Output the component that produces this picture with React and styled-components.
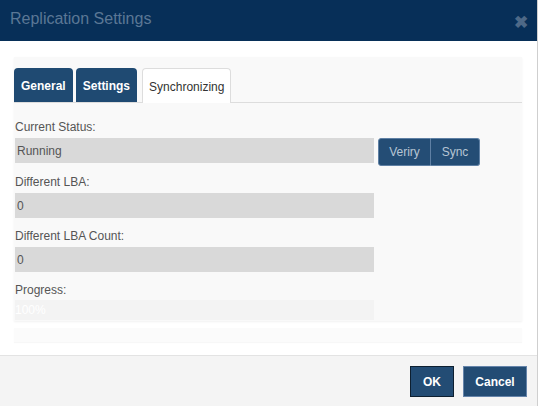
import React, { useState } from "react";
import styled, { createGlobalStyle } from "styled-components";

const Global = createGlobalStyle`
  html, body {
    margin: 0;
    padding: 0;
    background: #ffffff;
  }
  body {
    font-family: "Liberation Sans", Arial, sans-serif;
  }
`;

const Dialog = styled.div`
  width: 537px;
  height: 406px;
  border-right: 1px solid #cfcfcf;
  display: flex;
  flex-direction: column;
  background: #ffffff;
`;

const Header = styled.div`
  height: 41px;
  background: #072f58;
  display: flex;
  align-items: center;
  justify-content: space-between;
  padding: 0 10px 0 10px;
  box-sizing: border-box;
`;

const Title = styled.h3`
  margin: 0;
  margin-top: -4px;
  font-size: 16px;
  font-weight: normal;
  color: #5b7795;
`;

const Close = styled.span`
  color: #4e6987;
  font-size: 17px;
  font-weight: bold;
  margin-top: 4px;
  margin-right: -1px;
`;

const Body = styled.div`
  flex: 1;
  padding: 16px 15px 0 14px;
  display: flex;
  flex-direction: column;
`;

const Panel = styled.div`
  background: #f9f9f9;
  padding-top: 11px;
  padding-bottom: 1px;
  box-shadow: 0 1px 2px rgba(0, 0, 0, 0.06);
`;

const TabBar = styled.div`
  display: flex;
  gap: 3px;
  border-bottom: 1px solid #dddddd;
  height: 34px;
`;

const Tab = styled.button`
  font-family: inherit;
  font-size: 12px;
  height: ${(p) => (p.active ? "35px" : "34px")};
  padding: 2px ${(p) => (p.active ? "6px" : "7px")} 0;
  margin-left: ${(p) => (p.active ? "2px" : "0")};
  border-radius: 4px 4px 0 0;
  cursor: pointer;
  background: ${(p) => (p.active ? "#ffffff" : "#1f4a72")};
  color: ${(p) => (p.active ? "#333333" : "#ffffff")};
  font-weight: ${(p) => (p.active ? "normal" : "bold")};
  border: ${(p) => (p.active ? "1px solid #dddddd" : "none")};
  border-bottom: none;
`;

const Content = styled.div`
  padding: 17px 0 0 1px;
  display: flex;
  flex-direction: column;
`;

const Label = styled.div`
  font-size: 12px;
  color: #555555;
  height: 14px;
  margin-bottom: ${(p) => (p.tight ? "3px" : "4px")};
  margin-top: ${(p) => p.top || "0"}px;
`;

const Row = styled.div`
  display: flex;
  align-items: flex-start;
  gap: 4px;
`;

const Field = styled.div`
  width: 359px;
  height: 25px;
  background: #d9d9d9;
  font-size: 12px;
  color: #555555;
  display: flex;
  align-items: center;
  padding-left: 2px;
  box-sizing: border-box;
`;

const Group = styled.div`
  display: flex;
  height: 28px;
`;

const GroupButton = styled.button`
  font-family: inherit;
  font-size: 12px;
  color: #b7c5d4;
  background: #244d75;
  border: 1px solid #5f80a4;
  border-radius: ${(p) => (p.first ? "3px 0 0 3px" : "0 3px 3px 0")};
  border-left-width: ${(p) => (p.first ? "1px" : "0")};
  width: ${(p) => p.w}px;
  padding: 0;
  cursor: pointer;
`;

const Progress = styled.div`
  width: 359px;
  height: 20px;
  background: #f0f0f0;
  display: flex;
  align-items: center;
`;

const Bar = styled.div`
  height: 100%;
  background: #f3f3f3;
  color: #ffffff;
  font-size: 12px;
  display: flex;
  align-items: center;
`;

const Strip = styled.div`
  margin-top: 7px;
  height: 14px;
  background: #fbfbfb;
  box-shadow: 0 1px 1px rgba(0, 0, 0, 0.03);
`;

const Footer = styled.div`
  height: 51px;
  background: #f4f4f4;
  border-top: 1px solid #e3e3e3;
  display: flex;
  justify-content: flex-end;
  align-items: flex-start;
  gap: 9px;
  padding: 10px 10px 0 0;
  box-sizing: border-box;
`;

const FooterButton = styled.button`
  font-family: inherit;
  font-size: 12px;
  font-weight: bold;
  color: #ffffff;
  background: #234c74;
  border: 1px solid ${(p) => (p.primary ? "#0d1f30" : "#6584aa")};
  height: 31px;
  width: ${(p) => p.w}px;
  padding: 0;
  cursor: pointer;
`;

const fields = [
  { label: "Different LBA:", value: "0", top: 9 },
  { label: "Different LBA Count:", value: "0", top: 11 },
];

export default function App() {
  const [tab, setTab] = useState("Synchronizing");
  const progress = 100;
  return (
    <>
      <Global />
      <Dialog>
        <Header>
          <Title>Replication Settings</Title>
          <Close>✖</Close>
        </Header>
        <Body>
          <Panel>
            <TabBar>
              {["General", "Settings", "Synchronizing"].map((t) => (
                <Tab key={t} active={tab === t} onClick={() => setTab(t)}>
                  {t}
                </Tab>
              ))}
            </TabBar>
            <Content>
              <Label>Current Status:</Label>
              <Row>
                <Field>Running</Field>
                <Group>
                  <GroupButton first w={53}>Veriry</GroupButton>
                  <GroupButton w={49}>Sync</GroupButton>
                </Group>
              </Row>
              {fields.map((f) => (
                <React.Fragment key={f.label}>
                  <Label top={f.top}>{f.label}</Label>
                  <Field>{f.value}</Field>
                </React.Fragment>
              ))}
              <Label top={11} tight>Progress:</Label>
              <Progress>
                <Bar style={{ width: `${progress}%` }}>{progress}%</Bar>
              </Progress>
            </Content>
          </Panel>
          <Strip />
        </Body>
        <Footer>
          <FooterButton primary w={44}>OK</FooterButton>
          <FooterButton w={64}>Cancel</FooterButton>
        </Footer>
      </Dialog>
    </>
  );
}
